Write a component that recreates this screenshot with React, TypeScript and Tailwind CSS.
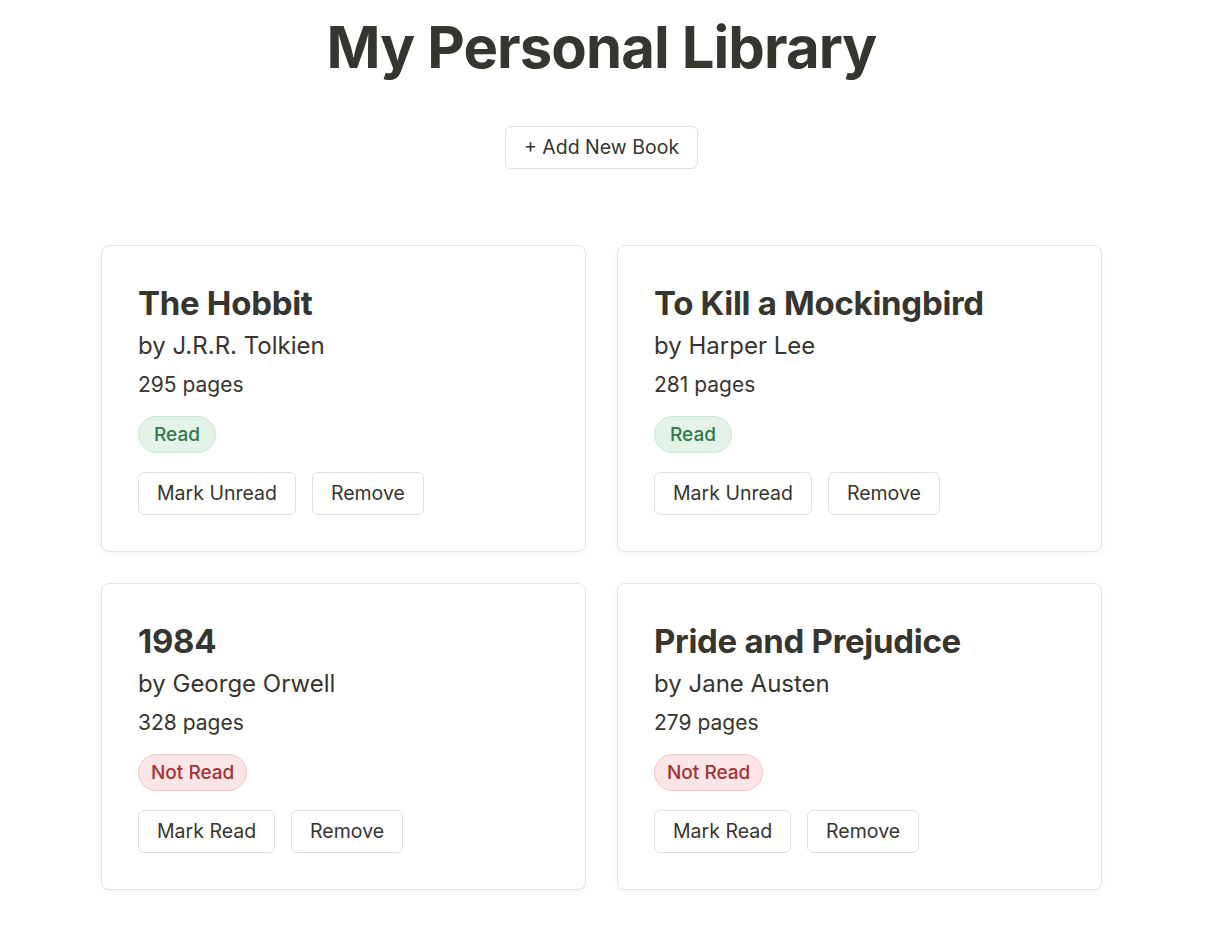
import React from "react";

type Book = { title: string; author: string; pages: number; read: boolean };

const books: Book[] = [
  { title: "The Hobbit", author: "J.R.R. Tolkien", pages: 295, read: true },
  { title: "To Kill a Mockingbird", author: "Harper Lee", pages: 281, read: true },
  { title: "1984", author: "George Orwell", pages: 328, read: false },
  { title: "Pride and Prejudice", author: "Jane Austen", pages: 279, read: false },
];

function Card({ b }: { b: Book }) {
  return (
    <div className="rounded-[8px] border border-[#e3e3e1] bg-white px-[36px] pt-[37px] pb-[36px] shadow-[0_2px_6px_rgba(0,0,0,0.04)]">
      <h2 className="text-[33px] font-bold leading-[40px] tracking-[-0.3px] text-[#37352f]">{b.title}</h2>
      <p className="mt-[7px] text-[24px] leading-[32px] text-[#37352f]">by {b.author}</p>
      <p className="mt-[9px] text-[21px] leading-[28px] text-[#37352f]">{b.pages} pages</p>
      <div className="mt-[17px] flex">
        {b.read ? (
          <span className="rounded-full border border-[#c6e7d0] bg-[#e4f3e8] px-[15px] py-[6px] text-[19px] leading-[23px] font-medium text-[#2f7a4d]">
            Read
          </span>
        ) : (
          <span className="rounded-full border border-[#f3c4c6] bg-[#fbe5e6] px-[12px] py-[6px] text-[19px] leading-[23px] font-medium text-[#a23336]">
            Not Read
          </span>
        )}
      </div>
      <div className="mt-[19px] flex gap-[16px]">
        <button className="rounded-[6px] border border-[#e0e0de] bg-white px-[18px] py-[8px] text-[19.5px] leading-[25px] text-[#37352f]">
          {b.read ? "Mark Unread" : "Mark Read"}
        </button>
        <button className="rounded-[6px] border border-[#e0e0de] bg-white px-[18px] py-[8px] text-[19.5px] leading-[25px] text-[#37352f]">
          Remove
        </button>
      </div>
    </div>
  );
}

export default function App() {
  return (
    <div className="min-h-screen bg-white font-['Inter',sans-serif]">
      <div className="w-[1203px]">
        <div className="mx-auto max-w-[1001px] pt-[14px] pb-[40px]">
          <h1 className="text-center text-[58px] font-bold leading-[66px] tracking-[-0.9px] text-[#37352f]">
            My Personal Library
          </h1>
          <div className="mt-[46px] flex justify-center">
            <button className="rounded-[6px] border border-[#e0e0de] bg-white px-[18px] py-[8px] text-[19.5px] leading-[25px] text-[#37352f]">
              + Add New Book
            </button>
          </div>
          <div className="mt-[76px] grid grid-cols-2 gap-[31px]">
            {books.map((b) => (
              <Card key={b.title} b={b} />
            ))}
          </div>
        </div>
      </div>
    </div>
  );
}
